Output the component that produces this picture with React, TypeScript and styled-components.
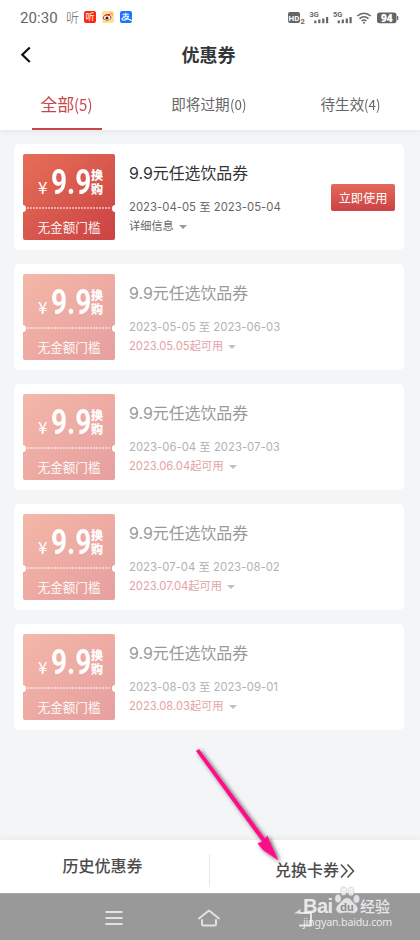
import React from "react";
import styled, { createGlobalStyle, css } from "styled-components";

const cjk = `"Noto Sans CJK SC", sans-serif`;

const GlobalStyle = createGlobalStyle`
  * { box-sizing: border-box; }
  body { margin: 0; background: #f4f5f7; font-family: ${cjk}; }
`;

const Screen = styled.div`
  position: relative;
  width: 420px;
  height: 940px;
  overflow: hidden;
  display: flex;
  flex-direction: column;
  background: #f4f5f7;
`;

const TopPanel = styled.header`
  height: 130px;
  flex: none;
  background: #fff;
  box-shadow: 0 1px 7px rgba(60, 75, 90, 0.1);
`;

const StatusBar = styled.div`
  height: 35px;
  padding: 0 21px 0 20px;
  display: flex;
  justify-content: space-between;
  color: #666;
`;

const StatusGroup = styled.div`
  display: flex;
  align-items: center;
`;

const Clock = styled.span`
  font: 400 15px/35px Roboto, sans-serif;
  width: 46px;
  letter-spacing: 0.1px;
  padding-top: 1px;
`;

const AppGlyph = styled.span`
  font: 300 13px/12px ${cjk};
  width: 12px;
  margin: -2px 6px 0 0;
`;

const AppBadge = styled.span<{ $bg: string }>`
  width: 12px;
  height: 12px;
  margin: -1px 6px 0 0;
  border-radius: 2px;
  background: ${(p) => p.$bg};
  color: #fff;
  font: 400 9px/12px ${cjk};
  text-align: center;
  overflow: hidden;
  svg { display: block; }
`;

const TitleBar = styled.div`
  height: 40px;
  display: grid;
  grid-template-columns: 60px 1fr 64px;
  align-items: center;
`;

const BackButton = styled.button`
  border: 0;
  background: none;
  padding: 0 0 0 20px;
  height: 40px;
  display: flex;
  align-items: center;
`;

const PageTitle = styled.h1`
  margin: 0;
  padding: 0 0 2px 1px;
  font: 700 18px/36px ${cjk};
  color: #333739;
  text-align: center;
`;

const Tabs = styled.nav`
  height: 55px;
  display: flex;
  padding-left: 32px;
`;

const Tab = styled.div<{ $active?: boolean; $width: number; $gap?: number }>`
  width: ${(p) => p.$width}px;
  margin-left: ${(p) => p.$gap || 0}px;
  height: 55px;
  text-align: center;
  white-space: nowrap;
  color: #666;
  font: 400 14.6px/57px ${cjk};
  ${(p) =>
    p.$active &&
    css`
      color: #c8474a;
      font-size: 17px;
      line-height: 58px;
      border-bottom: 2px solid #c8474a;
    `}
`;

const TabCount = styled.span<{ $big?: boolean }>`
  display: inline-block;
  font-size: ${(p) => (p.$big ? 15.8 : 14)}px;
  transform: scaleX(0.95);
  transform-origin: left;
`;

const List = styled.main`
  flex: 1;
  padding: 14px 16px 0 14px;
  display: flex;
  flex-direction: column;
  gap: 14px;
`;

const Card = styled.article`
  height: 106px;
  flex: none;
  padding: 10px 9px;
  display: flex;
  border-radius: 5px;
  background: #fff;
`;

const Ticket = styled.div<{ $muted: boolean }>`
  position: relative;
  width: 92px;
  height: 86px;
  overflow: hidden;
  border-radius: 2px;
  color: #fff;
  background: ${(p) =>
    p.$muted
      ? "linear-gradient(140deg, #f4b7a8, #e69f9f)"
      : "linear-gradient(140deg, #e66f57, #cb4244)"};
`;

const PriceRow = styled.div`
  height: 54px;
  padding-left: 15px;
  display: flex;
  align-items: flex-start;
`;

const Yen = styled.span`
  width: 13px;
  padding-top: 23px;
  font: 400 17px/20px ${cjk};
  display: flex;
`;

const Amount = styled.span`
  width: 40px;
  font: 700 35px/40px Roboto, sans-serif;
  padding-top: 9px;
  transform: scaleX(0.8);
  transform-origin: left;
`;

const Exchange = styled.span`
  width: 12px;
  padding-top: 14px;
  font: 900 12px/14px ${cjk};
`;

const Perforation = styled.div`
  position: absolute;
  left: 4px;
  right: 4px;
  top: 53px;
  height: 2px;
  background: repeating-linear-gradient(90deg, rgba(255, 255, 255, 0.5) 0 2px, transparent 2px 3px);
`;

const Notch = styled.i<{ $side: "left" | "right" }>`
  position: absolute;
  top: 50.5px;
  ${(p) => p.$side}: -4px;
  width: 7px;
  height: 7px;
  border-radius: 50%;
  background: #fff;
`;

const Threshold = styled.div`
  font: 350 12.6px/30px ${cjk};
  height: 32px;
  padding-top: 4px;
  text-align: center;
  white-space: nowrap;
`;

const Info = styled.div`
  width: 202px;
  padding-left: 14px;
  white-space: nowrap;
`;

const Name = styled.h2<{ $muted: boolean }>`
  margin: 8px 0 0;
  font: 400 15.9px/24px Inter, ${cjk};
  color: ${(p) => (p.$muted ? "#999" : "#333")};
`;

const Period = styled.div<{ $muted: boolean }>`
  margin-top: 11px;
  font: 400 11.3px/20px Inter, ${cjk};
  letter-spacing: 0.03px;
  color: ${(p) => (p.$muted ? "#b2b2b2" : "#666")};
`;

const Note = styled.div<{ $muted: boolean }>`
  display: flex;
  align-items: center;
  gap: 5px;
  font: 400 11.2px/19px Inter, ${cjk};
  color: ${(p) => (p.$muted ? "#e3a3a4" : "#666")};
`;

const Caret = styled.i<{ $muted: boolean }>`
  border: 4px solid transparent;
  border-bottom: 0;
  border-top: 4.5px solid ${(p) => (p.$muted ? "#c2c2c2" : "#999")};
`;

const UseButton = styled.button`
  width: 64px;
  height: 27px;
  margin: 30px 0 0 14px;
  padding: 0;
  border: 0;
  border-radius: 2px;
  color: #fff;
  font: 400 12.2px/26px ${cjk};
  background: linear-gradient(#e36a58, #cc4245);
`;

const Footer = styled.footer`
  height: 53px;
  flex: none;
  display: flex;
  background: #fff;
  box-shadow: 0 -1px 6px rgba(60, 75, 90, 0.08);
`;

const FooterAction = styled.div<{ $divided?: boolean }>`
  width: ${(p) => (p.$divided ? 210 : 209)}px;
  display: flex;
  justify-content: center;
  font: 500 16px/24px ${cjk};
  color: #4c4c4c;
  padding: ${(p) => (p.$divided ? "17px 0 0" : "13px 4px 0 0")};
  svg { margin-top: 6px; }
`;

const Divider = styled.i`
  width: 1px;
  height: 33px;
  margin: 14px 0 0;
  background: #e8e8e8;
`;

const SystemNav = styled.div`
  height: 47px;
  flex: none;
  display: flex;
  align-items: center;
  background: #999;
  border-top: 1px solid #aaa;
`;

const NavIcon = styled.div<{ $gap: number }>`
  margin-left: ${(p) => p.$gap}px;
  padding-top: 1px;
  svg { display: block; }
`;

const Overlay = styled.svg`
  position: absolute;
  left: 0;
  top: 0;
  pointer-events: none;
`;

const Watermark = styled.div`
  position: absolute;
  left: 303px;
  top: 886px;
  width: 96px;
  color: rgba(255, 255, 255, 0.8);
`;

const Brand = styled.div`
  display: flex;
  align-items: flex-start;
  height: 31px;
  b {
    width: 31px;
    padding-top: 11px;
    font: 700 20px/18px "Liberation Sans", sans-serif;
    letter-spacing: -0.5px;
  }
  span {
    padding-top: 11px;
    font: 500 15px/18px ${cjk};
  }
`;

const Site = styled.div`
  font: 400 10.7px/11px "Noto Sans", sans-serif;
  letter-spacing: -0.2px;
  white-space: nowrap;
`;

const coupons = [
  { from: "2023-04-05", to: "2023-05-04", note: "详细信息", active: true },
  { from: "2023-05-05", to: "2023-06-03", note: "2023.05.05起可用", active: false },
  { from: "2023-06-04", to: "2023-07-03", note: "2023.06.04起可用", active: false },
  { from: "2023-07-04", to: "2023-08-02", note: "2023.07.04起可用", active: false },
  { from: "2023-08-03", to: "2023-09-01", note: "2023.08.03起可用", active: false },
];

function SignalIcons() {
  return (
    <svg width="111" height="18" viewBox="0 0 111 18" fill="#666">
      <rect x="0" y="3" width="12" height="11" rx="2" />
      <text x="6" y="11.5" fontFamily="Roboto" fontWeight="700" fontSize="8" fill="#fff" textAnchor="middle">HD</text>
      <text x="12.5" y="14.5" fontFamily="Roboto" fontWeight="700" fontSize="7.5">2</text>
      {["3G", "5G"].map((label, i) => (
        <g key={label} transform={`translate(${21.5 + i * 23.5} -0.5)`}>
          <text x="0" y="8" fontFamily="Roboto" fontWeight="700" fontSize="7.4">{label}</text>
          <rect x="4.7" y="12" width="2.2" height="2.7" />
          <rect x="8.7" y="11" width="2.2" height="3.7" />
          <rect x="12.7" y="10" width="2.2" height="4.7" />
          <rect x="16.5" y="8.5" width="2.2" height="6.2" />
        </g>
      ))}
      <g fill="none" stroke="#666" strokeWidth="1.6">
        <path d="M69.3 7 Q76 1.5 82.700 7" />
        <path d="M71.500 9.600 Q76 5.900 80.500 9.600" />
        <path d="M73.600 12 Q76 10 78.400 12" />
      </g>
      <circle cx="76" cy="13.8" r="1" />
      <rect x="89" y="3.5" width="19.5" height="10.7" rx="2.5" />
      <rect x="109" y="7" width="1.2" height="4" />
      <text x="98.800" y="12.5" fontFamily="Open Sans" fontWeight="800" fontSize="10" fill="#fff" textAnchor="middle">94</text>
    </svg>
  );
}

function Coupon({ item }: { item: (typeof coupons)[number] }) {
  const muted = !item.active;
  return (
    <Card>
      <Ticket $muted={muted}>
        <PriceRow>
          <Yen>¥</Yen>
          <Amount>9.9</Amount>
          <Exchange>换购</Exchange>
        </PriceRow>
        <Threshold>无金额门槛</Threshold>
        <Perforation />
        <Notch $side="left" />
        <Notch $side="right" />
      </Ticket>
      <Info>
        <Name $muted={muted}>9.9元任选饮品券</Name>
        <Period $muted={muted}>{item.from} 至 {item.to}</Period>
        <Note $muted={muted}>
          {item.note}
          <Caret $muted={muted} />
        </Note>
      </Info>
      {item.active && <UseButton>立即使用</UseButton>}
    </Card>
  );
}

export default function App() {
  return (
    <Screen>
      <GlobalStyle />
      <TopPanel>
        <StatusBar>
          <StatusGroup>
            <Clock>20:30</Clock>
            <AppGlyph>听</AppGlyph>
            <AppBadge $bg="#fa2a10">听</AppBadge>
            <AppBadge $bg="#fbe29a">
              <svg width="12" height="12" viewBox="0 0 12 12">
                <path d="M1 7C1 5 4 2.500 5.200 3.300C8 2.700 8.500 3.500 8 4.700C10 5.200 10 7.500 7.500 8.900C4.500 10.200 1 9 1 7Z" fill="#d9222a" />
                <ellipse cx="5.200" cy="6.800" rx="3.200" ry="2.200" fill="#fff" />
                <circle cx="5" cy="7" r="1.500" fill="#222" />
                <path d="M8 2Q10.700 1.700 10.300 4.600" fill="none" stroke="#f39a1f" />
              </svg>
            </AppBadge>
            <AppBadge $bg="#1677ff">
              <svg width="12" height="12" viewBox="0 0 12 12" fill="none" stroke="#fff" strokeWidth="1.100">
                <path d="M2.500 3.300H9M5.800 1.800V5M3 5.200H8.500C7.700 7.500 5.500 9.300 3.500 9.200C1.300 9 1.500 6.500 3.800 6.700C6.500 7 8.500 8.500 12 9.500" />
              </svg>
            </AppBadge>
          </StatusGroup>
          <StatusGroup>
            <SignalIcons />
          </StatusGroup>
        </StatusBar>
        <TitleBar>
          <BackButton aria-label="返回">
            <svg width="12" height="18" viewBox="0 0 12 18" fill="none" stroke="#111" strokeWidth="2.200">
              <path d="M9.800 1.500L2.300 8.700L9.800 16" />
            </svg>
          </BackButton>
          <PageTitle>优惠券</PageTitle>
        </TitleBar>
        <Tabs>
          <Tab $active $width={70}>全部<TabCount $big>(5)</TabCount></Tab>
          <Tab $width={76} $gap={69}>即将过期<TabCount>(0)</TabCount></Tab>
          <Tab $width={62} $gap={73}>待生效<TabCount>(4)</TabCount></Tab>
        </Tabs>
      </TopPanel>
      <List>
        {coupons.map((item) => <Coupon key={item.from} item={item} />)}
      </List>
      <Footer>
        <FooterAction>历史优惠券</FooterAction>
        <Divider />
        <FooterAction $divided>
          兑换卡券
          <svg width="16" height="16" viewBox="0 0 16 16" fill="none" stroke="#4c4c4c" strokeWidth="1.500">
            <path d="M2 1.500L8 8L2 14.500M8.500 1.500L14.500 8L8.500 14.500" />
          </svg>
        </FooterAction>
      </Footer>
      <SystemNav>
        <NavIcon $gap={105}>
          <svg width="18" height="16" stroke="#e2e2e2" strokeWidth="2.200" strokeLinecap="round">
            <path d="M1.300 2H16.700M1.300 8H16.700M1.300 14H16.700" />
          </svg>
        </NavIcon>
        <NavIcon $gap={74}>
          <svg width="24" height="20" fill="none" stroke="#e2e2e2" strokeWidth="2" strokeLinecap="round" strokeLinejoin="round">
            <path d="M2 10.500L12 2.500L22 10.500M5 12V16Q5 17.500 6.500 17.500H17.500Q19 17.500 19 16V12" />
          </svg>
        </NavIcon>
        <NavIcon $gap={73}>
          <svg width="20" height="20" fill="none" stroke="#e2e2e2" strokeWidth="2">
            <path d="M5 5H17V17.500H5" />
            <path d="M0 5.500L6.500 1V5.500Z" fill="#e2e2e2" stroke="none" />
          </svg>
        </NavIcon>
      </SystemNav>
      <Overlay width="420" height="940">
        <defs>
          <filter id="arrowShadow" x="-20%" y="-20%" width="150%" height="150%">
            <feDropShadow dx="2" dy="1.500" stdDeviation="2" floodColor="#000" floodOpacity="0.65" />
          </filter>
        </defs>
        <path
          filter="url(#arrowShadow)"
          fill="#ff0a86"
          d="M196 751L199 749L265 838.500L267.500 835.500L269.500 841L278.500 860.500L263 850L257.500 843.500L262 841.500Z"
        />
      </Overlay>
      <Watermark>
        <Brand>
          <b>Bai</b>
          <svg width="26" height="30" viewBox="0 0 26 30">
            <g fill="#eee" fillOpacity="0.85" stroke="#bbb" strokeWidth="0.500">
              <ellipse cx="4" cy="12.500" rx="3" ry="4" />
              <ellipse cx="9.500" cy="5" rx="3" ry="4.300" />
              <ellipse cx="17" cy="5.500" rx="3" ry="4.300" />
              <ellipse cx="22.500" cy="13" rx="3" ry="4" />
              <path d="M13 12C17 12 18 16 22 19C26 24 22 28 18 27Q13 26 8 27C3 28 0 23 4 19C8 16 9 12 13 12Z" />
            </g>
            <text x="13" y="25" textAnchor="middle" fontFamily="Liberation Sans" fontWeight="700" fontSize="11" fill="#888">du</text>
          </svg>
          <span>经验</span>
        </Brand>
        <Site>jingyan.baidu.com</Site>
      </Watermark>
    </Screen>
  );
}
